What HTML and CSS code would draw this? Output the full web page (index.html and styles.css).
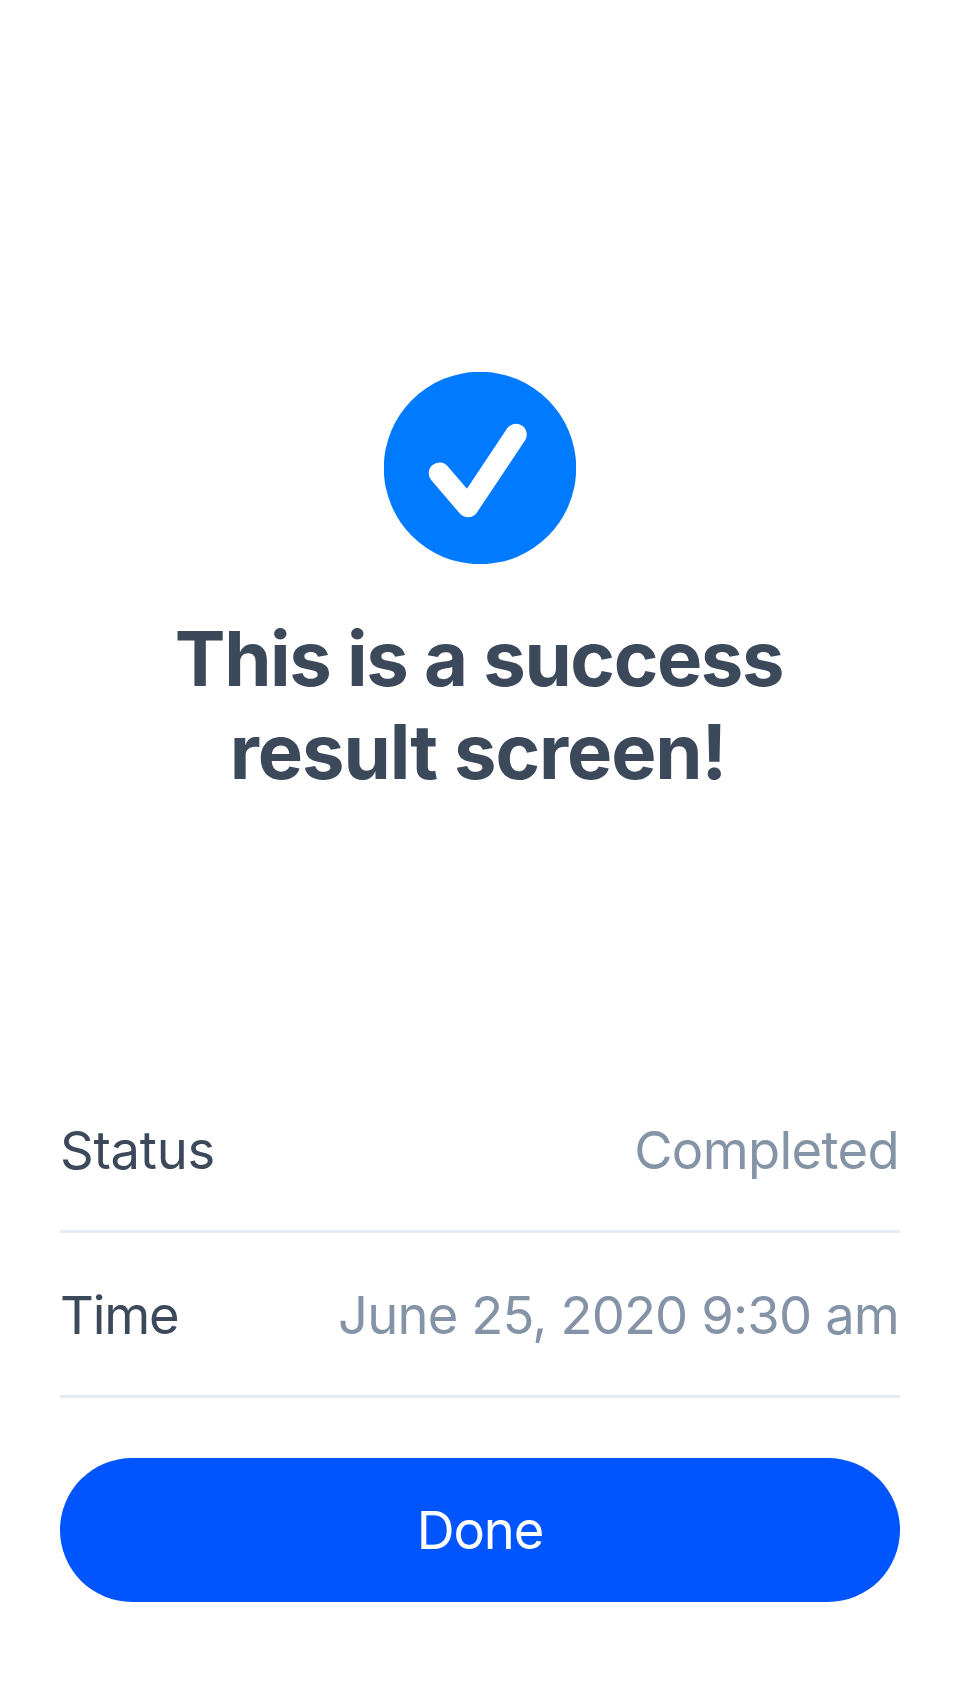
FILE: index.html
```html
<!DOCTYPE html>
<html lang="en">
<head>
<meta charset="utf-8">
<title>Result</title>
<link rel="stylesheet" href="styles.css">
</head>
<body>
<main class="screen">
  <section class="result">
    <svg class="result-icon" viewBox="0 0 192 192" aria-hidden="true">
      <circle cx="96" cy="96" r="96.200" fill="#007aff"/>
      <path d="M55.500 101.200 L84 134.500 L132 62.500" fill="none" stroke="#fff" stroke-width="21.500" stroke-linecap="round" stroke-linejoin="round"/>
    </svg>
    <h1 class="title"><span class="line line-first">This is a success</span><span class="line line-second">result screen!</span></h1>
  </section>
  <dl class="details">
    <div class="row"><dt class="label status">Status</dt><dd class="value completed">Completed</dd></div>
    <div class="row"><dt class="label time">Time</dt><dd class="value date">June 25, 2020 9:30 am</dd></div>
  </dl>
  <button class="done" type="button">Done</button>
</main>
</body>
</html>
```
FILE: styles.css
```css
* { box-sizing: border-box; }
body { margin: 0; background: #fff; font-family: Inter, sans-serif; }
.screen { width: 960px; height: 1704px; padding: 372px 60px 102px; display: flex; flex-direction: column; }
.result { display: flex; flex-direction: column; align-items: center; }
.result-icon { width: 192px; height: 192px; }
.title { margin: 48px 0 0; color: #3c495a; font-size: 76px; font-weight: 700; line-height: 93px; text-align: center; }
.line { display: block; white-space: nowrap; }
.line-first { letter-spacing: -1.4px; padding-right: 2px; }
.line-second { letter-spacing: -1.1px; padding-right: 4px; }
.details { margin: auto 0 60px; }
.row { height: 165px; padding-top: 2px; display: flex; align-items: center; justify-content: space-between; border-bottom: 3px solid #e2eaf2; font-size: 52.5px; white-space: nowrap; }
.label { color: #3c495a; }
.value { margin: 0; padding-right: 1px; color: #8494a6; }
.status { letter-spacing: -0.25px; }
.time { letter-spacing: -1.2px; }
.completed { letter-spacing: -0.65px; }
.date { letter-spacing: -0.83px; }
.done { height: 144px; padding: 0 0 1px; border: 0; border-radius: 72px; background: #0055ff; color: #fff; font: 400 52.5px Inter, sans-serif; letter-spacing: -1.1px; }
```
